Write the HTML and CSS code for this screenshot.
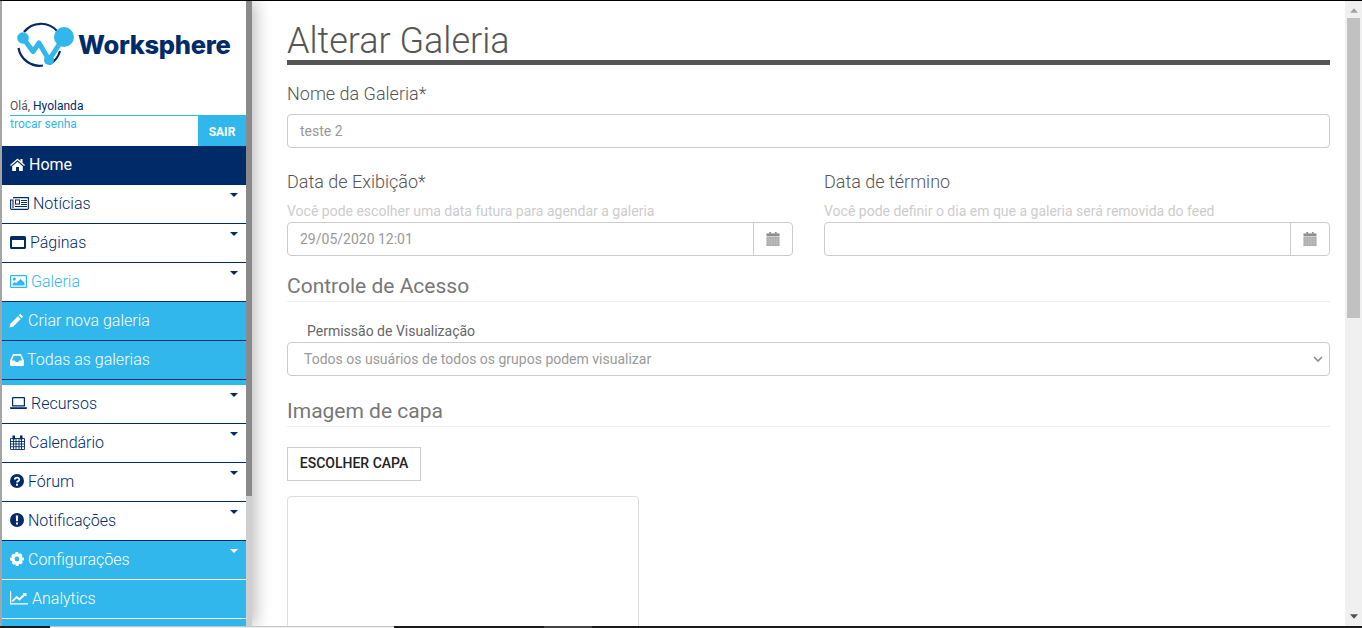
FILE: index.html
```html
<!DOCTYPE html>
<html lang="pt-BR">
<head>
<meta charset="utf-8">
<title>Alterar Galeria</title>
<link rel="stylesheet" href="styles.css">
</head>
<body>
<div class="app">
  <aside class="sidebar">
    <div class="sidebar-inner">
      <div class="logo">
        <svg class="logo-mark" width="62" height="50" viewBox="0 0 62 50">
          <path d="M8 11A21.500 21.500 0 0 1 41 10M44 30A21.500 21.500 0 0 1 34 43M27 44.500A21.500 21.500 0 0 1 2.500 27" fill="none" stroke="#002a68" stroke-width="2.200"/>
          <path d="M7 17L17 30.500L23 22L33 39L48 16" fill="none" stroke="#31b7ec" stroke-width="5" stroke-linejoin="round"/>
          <circle cx="7" cy="17" r="5.800" fill="#31b7ec"/>
          <circle cx="48" cy="16" r="10" fill="#31b7ec"/>
          <circle cx="33" cy="39" r="5" fill="#31b7ec"/>
        </svg>
        <span class="logo-text">Worksphere</span>
      </div>
      <div class="user-hello">Olá, <b>Hyolanda</b></div>
      <div class="user-row">
        <a class="change-pass">trocar senha</a>
        <span class="logout">SAIR</span>
      </div>
      <nav class="menu">
        <div class="item home"><svg class="ic" width="15" height="13" viewBox="0 0 15 13"><path d="M7.500 0.500L0 7l.8 1L7.500 2.300 14.200 8l.8-1-2.500-2.200V1H10.500V3zM2.200 8.200V13H6V9H9V13H12.800V8.200L7.500 3.700z" fill="currentColor"/></svg>Home</div>
        <div class="item"><svg class="ic" width="19" height="13" viewBox="0 0 19 13"><path d="M3 .6H18.400V11.500A1 1 0 0 1 17.400 12.400H1.500A1 1 0 0 1 .6 11.500V3H3V11" fill="none" stroke="currentColor" stroke-width="1.100"/><path d="M5 2.500H10V7.500H5zM6 3.500V6.500H9V3.500z" fill="currentColor" fill-rule="evenodd"/><path d="M11 3H17V4H11zM11 5H17V6H11zM11 7H17V8H11zM5 9H17V10H5z" fill="currentColor"/></svg>Notícias<i class="caret"></i></div>
        <div class="item"><svg class="ic" width="16" height="13" viewBox="0 0 16 13"><path fill-rule="evenodd" d="M1.500 0H14.500A1.500 1.500 0 0 1 16 1.500V11.500A1.500 1.500 0 0 1 14.500 13H1.500A1.500 1.500 0 0 1 0 11.500V1.500A1.500 1.500 0 0 1 1.500 0zM2 4V11H14V4z" fill="currentColor"/></svg>Páginas<i class="caret"></i></div>
        <div class="item active"><svg class="ic" width="17" height="13" viewBox="0 0 17 13"><path fill-rule="evenodd" d="M1.200 0H15.800A1.200 1.200 0 0 1 17 1.200V11.800A1.200 1.200 0 0 1 15.800 13H1.200A1.200 1.200 0 0 1 0 11.800V1.200A1.200 1.200 0 0 1 1.200 0zM1.200 1.200V11.800H15.800V1.200z" fill="currentColor"/><circle cx="4.300" cy="4" r="1.600" fill="currentColor"/><path d="M2.500 10.500V8.800L4.500 7 6 8.300 10.500 4 14.500 7.800V10.500z" fill="currentColor"/></svg>Galeria<i class="caret"></i></div>
        <div class="item sub"><svg class="ic wide" width="15" height="15" viewBox="0 0 14 14"><path d="M10.500 .8L13.200 3.500 11.800 4.900 9.100 2.200zM8.300 3L11 5.700 4 12.700 .5 13.500 1.300 10z" fill="currentColor"/></svg>Criar nova galeria</div>
        <div class="item sub last"><svg class="ic tight" width="14" height="12" viewBox="0 0 14 12"><path fill-rule="evenodd" d="M3 0H11L14 6.500V11A1 1 0 0 1 13 12H1A1 1 0 0 1 0 11V6.500zM3.800 1.800L2 6.500H4.800L5.700 8H8.300L9.200 6.500H12L10.200 1.800z" fill="currentColor"/></svg>Todas as galerias</div>
        <div class="item"><svg class="ic" width="17" height="12" viewBox="0 0 17 12"><path fill-rule="evenodd" d="M3 0H14A1 1 0 0 1 15 1V9.500H2V1A1 1 0 0 1 3 0zM3.200 1.200V8.300H13.800V1.200zM0 10.200H17V11A1 1 0 0 1 16 12H1A1 1 0 0 1 0 11z" fill="currentColor"/></svg>Recursos<i class="caret"></i></div>
        <div class="item"><svg class="ic" width="15" height="15" viewBox="0 0 15 15"><path d="M.5 3.500H14.500V14.500H.5zM.5 6.500H14.500M.5 9H14.500M.5 11.700H14.500M3.500 3.500V14.500M6 3.500V14.500M9 3.500V14.500M11.500 3.500V14.500" fill="none" stroke="currentColor" stroke-width=".9"/><path d="M2.500 0.500H5V4.500H2.500zM10 0.500H12.500V4.500H10z" fill="currentColor"/></svg>Calendário<i class="caret"></i></div>
        <div class="item"><svg class="ic" width="14" height="14" viewBox="0 0 14 14"><circle cx="7" cy="7" r="7" fill="currentColor"/><path d="M4.800 5.500C4.800 3.200 9.300 3 9.300 5.500C9.300 7.200 7 7 7 8.500" fill="none" stroke="#fff" stroke-width="1.800"/><rect x="6" y="9.700" width="2" height="2" fill="#fff"/></svg>Fórum<i class="caret"></i></div>
        <div class="item"><svg class="ic" width="14" height="14" viewBox="0 0 14 14"><circle cx="7" cy="7" r="7" fill="currentColor"/><path d="M5.800 2.500H8.200L7.900 8.300H6.100zM6 9.500H8V11.500H6z" fill="#fff"/></svg>Notificações<i class="caret"></i></div>
        <div class="item sub light"><svg class="ic" width="14" height="14" viewBox="0 0 14 14"><path fill-rule="evenodd" d="M5.800 0H8.200L8.600 2 10.500 1.200 12.300 3 11.700 4.900 14 5.800V8.200L12 8.700 12.800 10.500 11 12.300 9.200 11.700 8.200 14H5.800L5.300 12 3.500 12.800 1.700 11 2.300 9.200 0 8.200V5.800L2 5.300 1.200 3.500 3 1.700 4.800 2.300zM7 4.600A2.400 2.400 0 1 0 7 9.400A2.400 2.400 0 1 0 7 4.600z" fill="currentColor"/></svg>Configurações<i class="caret"></i></div>
        <div class="item sub light"><svg class="ic" width="18" height="14" viewBox="0 0 19 14"><path d="M.6 0V13.300H19" fill="none" stroke="currentColor" stroke-width="1.300"/><path d="M2.500 10.500L7 6 10 8.500 15.500 3" fill="none" stroke="currentColor" stroke-width="2"/><path d="M13.300 1.800H17.300V5.800z" fill="currentColor"/></svg>Analytics</div>
        <div class="item sub light"></div>
      </nav>
    </div>
    <div class="side-scroll"><div class="side-thumb"></div></div>
  </aside>
  <main class="content">
    <div class="content-inner">
      <h1 class="title">Alterar Galeria</h1>
      <label class="field-label name-label">Nome da Galeria*</label>
      <div class="input">teste 2</div>
      <div class="dates">
        <div class="date-col">
          <label class="field-label">Data de Exibição*</label>
          <p class="hint">Você pode escolher uma data futura para agendar a galeria</p>
          <div class="date-input">
            <span class="date-value">29/05/2020 12:01</span>
            <span class="date-btn"><svg width="14" height="14" viewBox="0 0 14 15"><path d="M0 1.500H14V4.500H0z" fill="#8f8f8f"/><path d="M3 0H5V2H3zM9 0H11V2H9z" fill="#8f8f8f"/><path d="M0 5H14V15H0z" fill="#a9a9a9"/><path d="M0 7.500H14M0 10H14M0 12.500H14M2.800 5V15M5.600 5V15M8.400 5V15M11.200 5V15" stroke="#cfcfcf" stroke-width=".5"/></svg></span>
          </div>
        </div>
        <div class="date-col">
          <label class="field-label">Data de término</label>
          <p class="hint">Você pode definir o dia em que a galeria será removida do feed</p>
          <div class="date-input">
            <span class="date-value"></span>
            <span class="date-btn"><svg width="14" height="14" viewBox="0 0 14 15"><path d="M0 1.500H14V4.500H0z" fill="#8f8f8f"/><path d="M3 0H5V2H3zM9 0H11V2H9z" fill="#8f8f8f"/><path d="M0 5H14V15H0z" fill="#a9a9a9"/><path d="M0 7.500H14M0 10H14M0 12.500H14M2.800 5V15M5.600 5V15M8.400 5V15M11.200 5V15" stroke="#cfcfcf" stroke-width=".5"/></svg></span>
          </div>
        </div>
      </div>
      <h2 class="section">Controle de Acesso</h2>
      <label class="perm-label">Permissão de Visualização</label>
      <div class="select">
        <span>Todos os usuários de todos os grupos podem visualizar</span>
        <svg width="10" height="6" viewBox="0 0 10 6"><path d="M1 1L5 5 9 1" fill="none" stroke="#8c8c8c" stroke-width="1.600"/></svg>
      </div>
      <h2 class="section cover">Imagem de capa</h2>
      <button class="choose" type="button">ESCOLHER CAPA</button>
      <div class="preview"></div>
    </div>
    <div class="page-scroll">
      <svg class="arrow" width="8" height="5" viewBox="0 0 9 5"><path d="M4.500 0L9 5H0z" fill="#a3a3a3"/></svg>
      <div class="page-thumb"></div>
      <svg class="arrow down" width="8" height="5" viewBox="0 0 9 5"><path d="M0 0H9L4.500 5z" fill="#505050"/></svg>
    </div>
  </main>
</div>
<div class="taskbar">
  <span class="seg seg-start"></span>
  <span class="seg seg-window"></span>
  <span class="seg seg-gap"></span>
  <span class="seg seg-tab"></span>
  <span class="seg seg-rest"></span>
</div>
</body>
</html>
```
FILE: styles.css
```css
* { box-sizing: border-box; }
html, body { margin: 0; height: 100%; overflow: hidden; }
body { background: #fff; font-family: Roboto, "Liberation Sans", sans-serif; display: flex; flex-direction: column; height: 628px; border-top: 1px solid #000; }
.app { flex: 1; min-height: 0; display: flex; overflow: hidden; }
.sidebar { width: 252px; flex: none; display: flex; border-left: 2px solid #a5a5a5; box-shadow: 3px 0 16px rgba(0,0,0,.28); position: relative; z-index: 1; background: #fff; overflow: hidden; }
.sidebar-inner { width: 244px; flex: none; }
.side-scroll { width: 6px; background: #cfcfcf; }
.side-thumb { height: 495px; background: #8a8a8a; }
.logo { height: 99px; display: flex; padding: 20px 0 0 14px; align-items: flex-start; }
.logo-mark { flex: none; }
.logo-text { font-family: Inter, "Open Sans", sans-serif; font-weight: 800; font-size: 25.5px; line-height: 1; margin-top: 11px; color: #002a68; letter-spacing: -.3px; }
.user-hello { font-size: 12px; line-height: 13px; padding-left: 8px; color: #555; height: 15px; }
.user-hello b { font-weight: 400; color: #002a68; }
.user-row { display: flex; justify-content: space-between; height: 31px; margin-left: 8px; border-top: 1px solid #31b7ec; }
.change-pass { font-size: 12px; line-height: 17px; color: #31b7ec; font-weight: 400; }
.logout { width: 48px; background: #31b7ec; color: #fff; font-size: 12px; font-weight: 700; text-align: center; line-height: 32px; }
.menu { display: flex; flex-direction: column; }
.item { height: 39px; display: flex; align-items: center; gap: 3px; padding: 0 0 2px 8px; font-size: 16px; font-weight: 300; color: #002a68; border-bottom: 1px solid #002a68; position: relative; }
.ic { flex: none; margin-right: 1px; }
.ic.wide { margin-left: -1px; margin-right: 1px; }
.ic.tight { margin-right: 0; }
.home { background: #002a68; color: #fff; font-weight: 400; }
.active { color: #31b7ec; }
.sub { background: #31b7ec; color: #fff; }
.last { height: 44px; padding-bottom: 7px; border-bottom: none; background: linear-gradient(#31b7ec 38px, #002a68 38px, #002a68 39px, #31b7ec 39px); }
.light { border-bottom-color: #fff; }
.caret { position: absolute; right: 8px; top: 8px; width: 0; height: 0; border-left: 4px solid transparent; border-right: 4px solid transparent; border-top: 4px solid #002a68; }
.light .caret { border-top-color: #fff; }
.content { flex: 1; min-width: 0; display: flex; justify-content: space-between; }
.content-inner { width: 1043px; margin-left: 35px; flex: none; }
.title { margin: 0; height: 64px; padding-top: 17px; font-size: 36px; line-height: 46px; font-weight: 300; color: #555; border-bottom: 5px solid #555; }
.field-label { display: block; font-size: 18px; font-weight: 300; line-height: 22px; color: #555; }
.name-label { margin-top: 18px; height: 31px; }
.input { height: 34px; border: 1px solid #ccc; border-radius: 4px; padding-left: 12px; font-size: 14px; line-height: 32px; color: #999; }
.dates { display: grid; grid-template-columns: 506px 506px; column-gap: 31px; margin-top: 23px; }
.hint { margin: 8px 0 0; font-size: 14px; font-weight: 400; line-height: 20px; height: 21px; color: #ccc; }
.date-input { height: 34px; border: 1px solid #ccc; border-radius: 4px; display: flex; justify-content: space-between; }
.date-value { padding-left: 12px; font-size: 14px; line-height: 32px; color: #999; }
.date-btn { width: 39px; border-left: 1px solid #ccc; display: flex; align-items: center; justify-content: center; }
.section { margin: 17px 0 0; height: 29px; font-size: 21px; font-weight: 400; line-height: 26px; color: #777; border-bottom: 1px solid #eee; }
.perm-label { display: block; margin-top: 19px; padding-left: 20px; font-size: 14px; line-height: 20px; color: #666; height: 21px; }
.select { height: 34px; border: 1px solid #ccc; border-radius: 4px; display: flex; align-items: center; justify-content: space-between; padding: 0 6px 0 16px; font-size: 14px; color: #999; }
.section.cover { margin-top: 23px; height: 28px; line-height: 24px; }
.choose { display: block; margin-top: 20px; width: 134px; height: 34px; padding: 0 0 2px; background: #fff; border: 1px solid #ccc; border-radius: 0; font-family: inherit; font-size: 14px; font-weight: 500; color: #222; }
.preview { margin-top: 15px; width: 352px; height: 200px; border: 1px solid #ddd; border-radius: 4px; }
.page-scroll { width: 17px; flex: none; background: #f0f0f0; display: flex; flex-direction: column; align-items: center; padding-top: 7px; }
.page-thumb { width: 13px; height: 300px; margin-top: 5px; background: #c1c1c1; }
.arrow { flex: none; }
.arrow.down { margin-top: auto; margin-bottom: 7px; }
.taskbar { height: 2px; flex: none; display: flex; position: relative; z-index: 2; }
.seg { display: block; height: 100%; }
.seg-start { width: 50px; background: #1a1a1a; }
.seg-window { width: 344px; background: #f0f0f0; border-top: 1px solid #c4c4c4; }
.seg-gap { width: 150px; background: #1a1a1a; }
.seg-tab { width: 48px; background: #444; }
.seg-rest { flex: 1; background: #1a1a1a; }
```
